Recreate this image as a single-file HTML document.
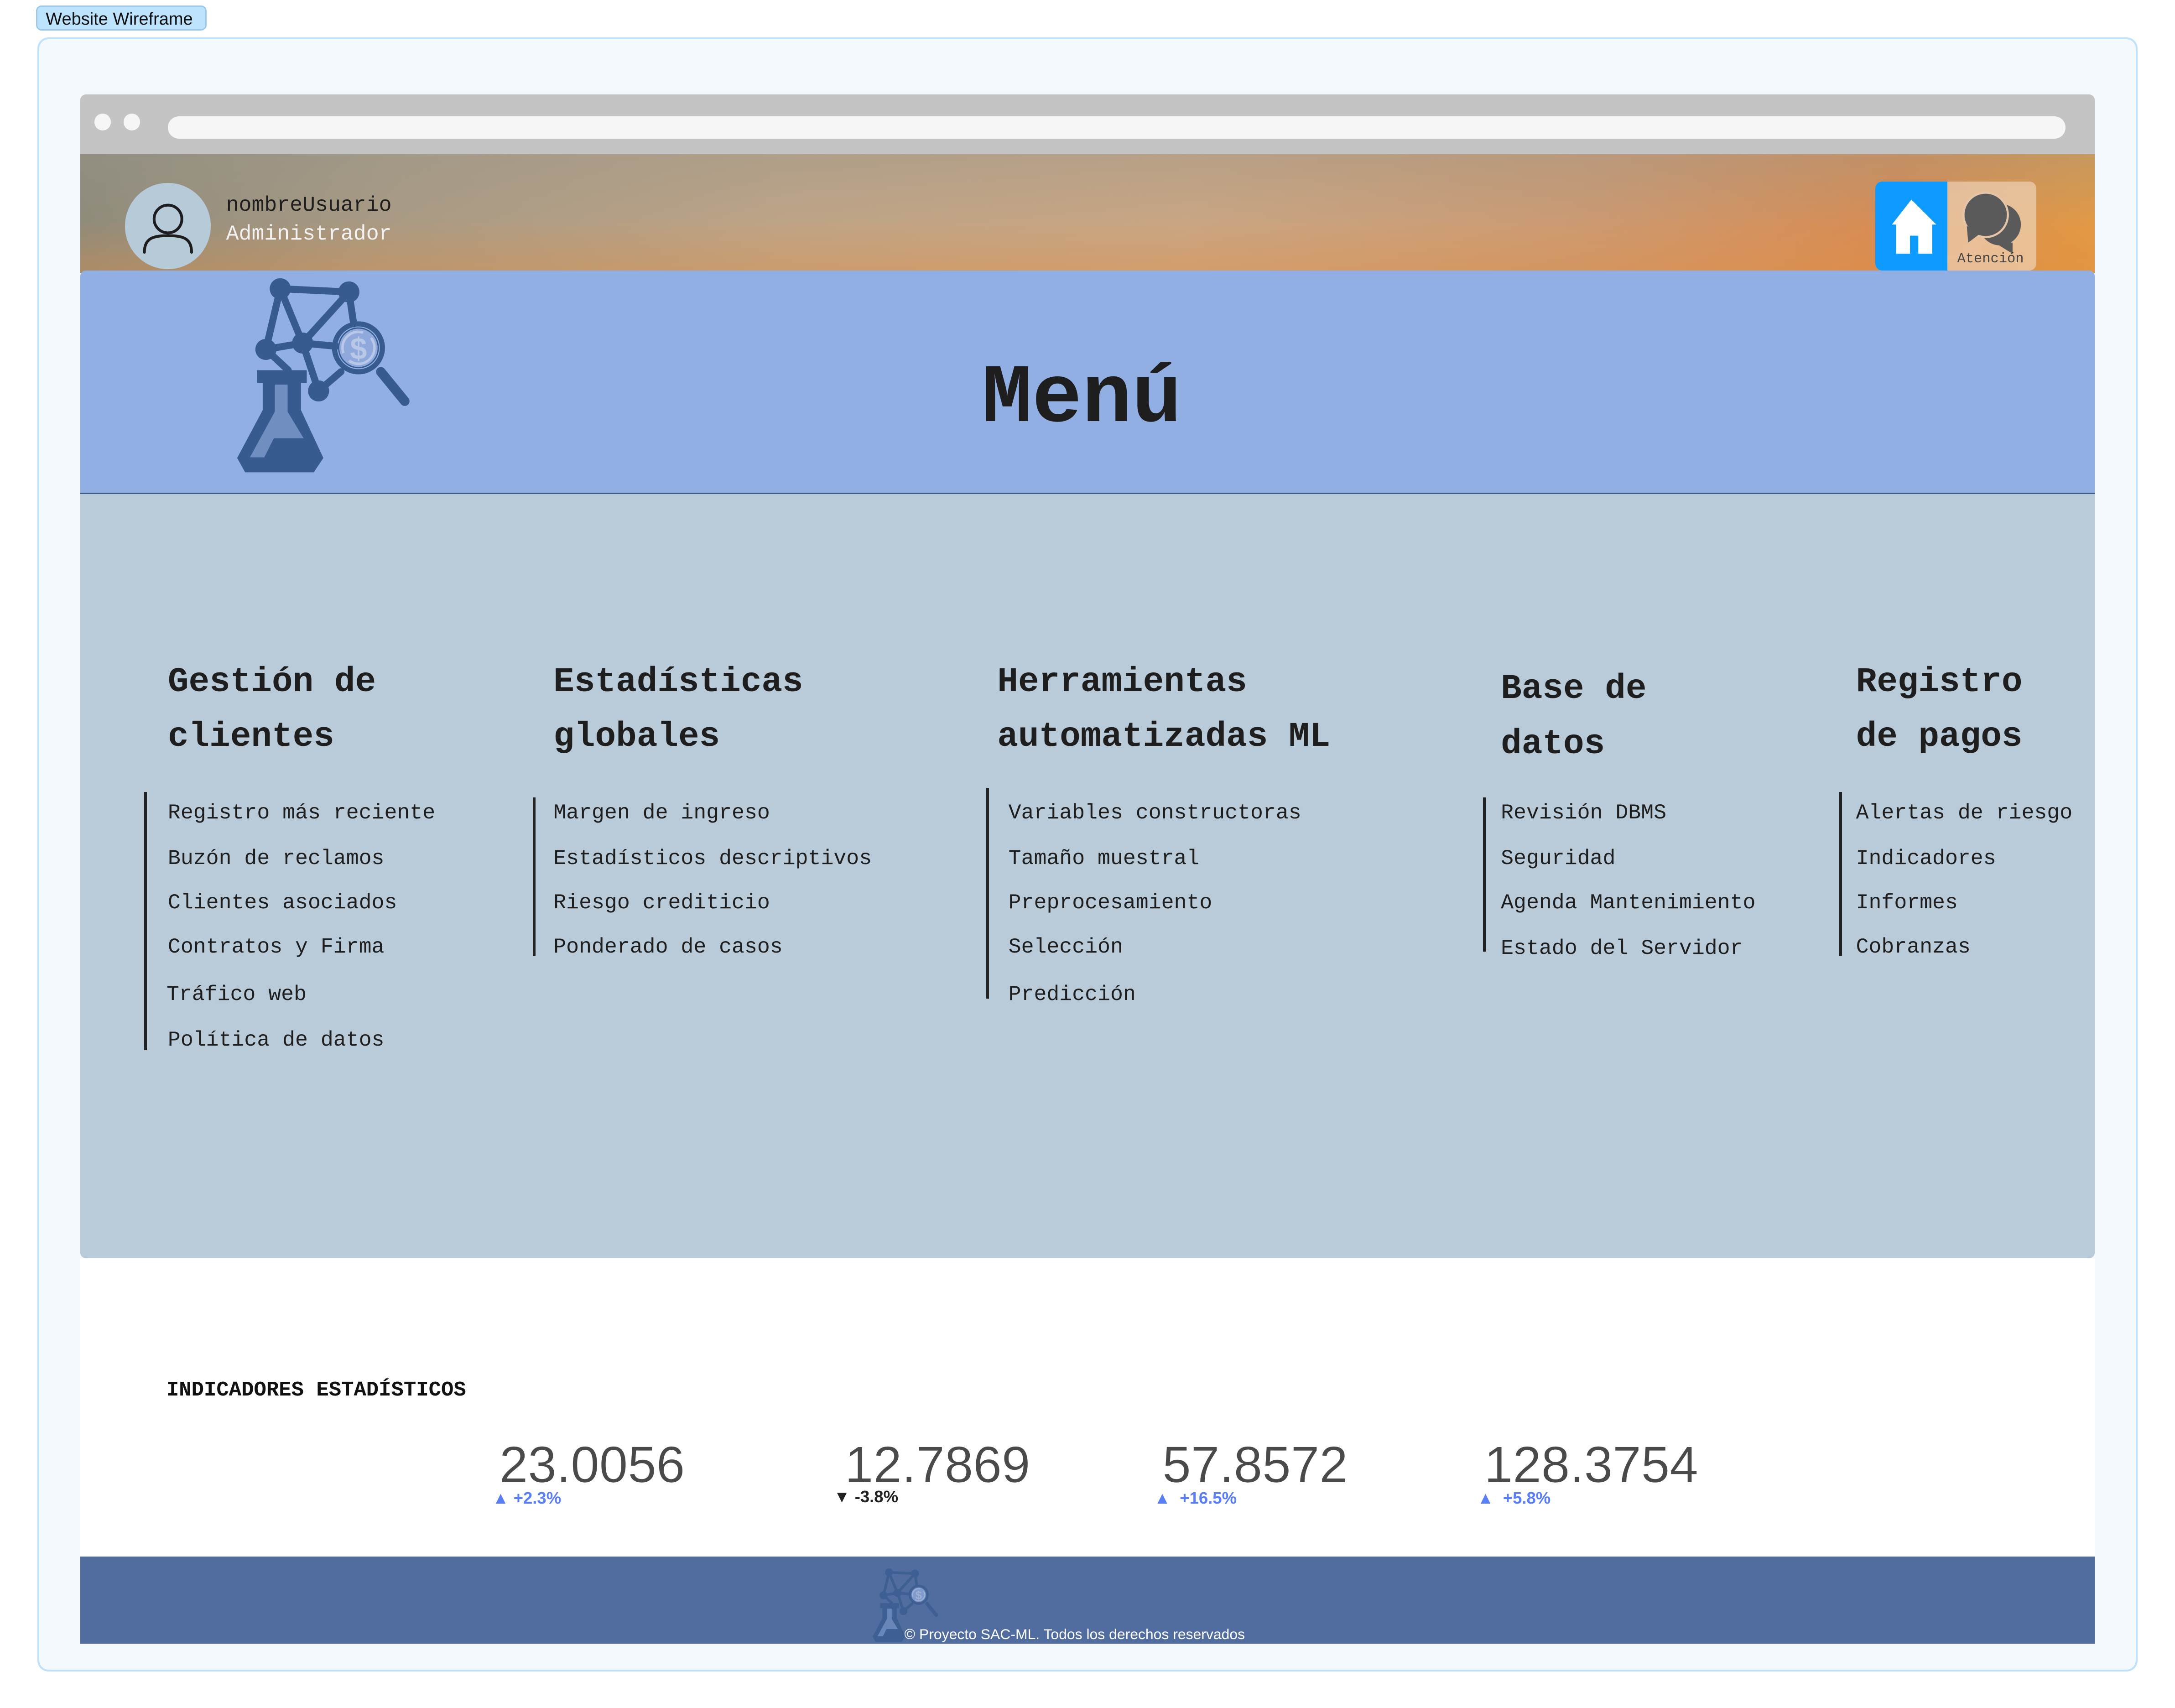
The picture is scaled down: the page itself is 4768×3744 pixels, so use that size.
<!DOCTYPE html>
<html><head><meta charset="utf-8">
<style>
html,body{margin:0;padding:0;background:#fff;}
body{width:4768px;height:3744px;overflow:hidden;}
#z{zoom:3.0408;width:1568px;height:1231px;position:relative;font-family:"Liberation Sans",sans-serif;}
.a{position:absolute;}
.mono{font-family:"Liberation Mono",monospace;}
.h{font-family:"Liberation Mono",monospace;font-weight:bold;font-size:25px;line-height:39.5px;color:#1e1e1e;white-space:nowrap;}
.it{font-family:"Liberation Mono",monospace;font-size:15.3px;color:#1e1e1e;white-space:nowrap;line-height:20px;}
.vl{position:absolute;width:2px;background:#222;}
.num{position:absolute;font-size:37px;font-weight:normal;color:#4a4a4a;letter-spacing:0px;line-height:40px;-webkit-text-stroke:0.2px #fff;}
.pc{position:absolute;font-size:12px;font-weight:bold;line-height:14px;}
</style></head><body>
<div id="z">
<svg width="0" height="0" style="position:absolute">
<defs>
<g id="logo">
<g stroke="#375b8f" stroke-width="22" fill="none" stroke-linecap="round">
<line x1="785" y1="910" x2="1000" y2="920"/>
<line x1="785" y1="910" x2="740" y2="1100"/>
<line x1="785" y1="910" x2="855" y2="1080"/>
<line x1="1000" y1="920" x2="855" y2="1080"/>
<line x1="1000" y1="920" x2="1015" y2="1020"/>
<line x1="740" y1="1100" x2="855" y2="1080"/>
<line x1="855" y1="1080" x2="960" y2="1090"/>
<line x1="855" y1="1080" x2="905" y2="1230"/>
<line x1="905" y1="1230" x2="975" y2="1170"/>
<line x1="740" y1="1100" x2="810" y2="1165"/>
<line x1="1100" y1="1170" x2="1175" y2="1262" stroke-width="30"/>
</g>
<g fill="#375b8f">
<circle cx="785" cy="910" r="33"/><circle cx="1000" cy="920" r="33"/>
<circle cx="740" cy="1100" r="33"/><circle cx="855" cy="1080" r="33"/>
<circle cx="905" cy="1230" r="33"/>
</g>
<circle cx="1030" cy="1095" r="75" fill="none" stroke="#375b8f" stroke-width="16"/>
<circle cx="1030" cy="1095" r="62" fill="#8fa9dc" stroke="#375b8f" stroke-width="4"/>
<circle cx="1030" cy="1095" r="50" fill="none" stroke="#b8c8e6" stroke-width="8" stroke-dasharray="110 30"/>
<text x="1030" y="1130" font-family="Liberation Sans" font-weight="bold" font-size="95" fill="#b8c8e6" text-anchor="middle">$</text>
<path fill="#375b8f" d="M712 1165 H868 V1205 H850 V1290 L920 1440 L890 1485 H675 L650 1440 L730 1290 V1205 H712 Z"/>
<path fill="#708fc0" d="M768 1210 H808 V1295 L858 1378 H765 L735 1438 H690 L768 1295 Z"/>
</g>
</defs></svg>

<div class="a" style="left:26px;top:4px;width:123px;height:18px;background:#bde3fd;border:1px solid #9cc8ea;border-radius:4px;font-size:12.5px;line-height:18px;padding-left:6px;box-sizing:border-box;color:#111;">Website Wireframe</div>
<div class="a" style="left:27px;top:27px;width:1514px;height:1178px;background:#f4f9fd;border:1.5px solid #c0e0fb;border-radius:8px;box-sizing:border-box;"></div>

<div class="a" style="left:58px;top:68px;width:1452px;height:44px;background:#c4c4c4;border-radius:4px 4px 0 0;"></div>
<div class="a" style="left:68px;top:82px;width:12px;height:12px;border-radius:50%;background:#f6f6f6;"></div>
<div class="a" style="left:89px;top:82px;width:12px;height:12px;border-radius:50%;background:#f6f6f6;"></div>
<div class="a" style="left:121px;top:84px;width:1368px;height:16px;border-radius:8px;background:#f6f6f6;"></div>

<div class="a" style="left:58px;top:111px;width:1452px;height:86px;background:linear-gradient(180deg,rgba(150,150,140,0.35) 0%,rgba(0,0,0,0) 60%),linear-gradient(95deg,#8f8b7b 0%,#a89a84 15%,#bea487 35%,#c9a684 55%,#cc9a72 75%,#d88c52 90%,#e29a45 100%);"></div>
<div class="a" style="left:58px;top:111px;width:1452px;height:86px;background:linear-gradient(180deg,rgba(0,0,0,0) 55%,rgba(230,140,60,0.35) 100%);"></div>
<div class="a" style="left:90px;top:132px;width:62px;height:62px;border-radius:50%;background:#b6cad8;"></div>
<svg class="a" style="left:90px;top:132px" width="62" height="62" viewBox="0 0 62 62"><circle cx="31" cy="26" r="10" fill="none" stroke="#1d1d1d" stroke-width="2"/><path d="M14 50 C14 40 20 38 31 38 C42 38 48 40 48 50" fill="none" stroke="#1d1d1d" stroke-width="2" stroke-linecap="round"/></svg>
<div class="a mono" style="left:163px;top:138px;font-size:15.3px;line-height:20px;color:#1e1e1e;">nombreUsuario</div>
<div class="a mono" style="left:163px;top:159px;font-size:15.3px;line-height:20px;color:#f2f2f2;">Administrador</div>

<div class="a" style="left:1352px;top:131px;width:52px;height:64px;background:#0e9bff;border-radius:5px 0 0 5px;"></div>
<svg class="a" style="left:1352px;top:131px" width="52" height="64" viewBox="0 0 52 64"><path fill="#fff" d="M26 13 L44 31 H41 V52 H31 V39 H25 V52 H15 V31 H12 Z"/></svg>
<div class="a" style="left:1404px;top:131px;width:64px;height:64px;background:rgba(240,215,190,0.65);border-radius:0 5px 5px 0;"></div>
<svg class="a" style="left:1404px;top:131px" width="64" height="64" viewBox="0 0 64 64">
<circle cx="38" cy="31" r="15" fill="#5a5a5a"/>
<path d="M34 44 L47 44 L47 52 Z" fill="#5a5a5a"/>
<circle cx="27.6" cy="24" r="16" fill="#5a5a5a" stroke="#e5c4a8" stroke-width="1.5"/>
<path d="M14 32 L15 44 L23 38 Z" fill="#5a5a5a"/>
</svg>
<div class="a mono" style="left:1411px;top:181px;font-size:10px;line-height:12px;color:#444;">Atención</div>

<div class="a" style="left:58px;top:195px;width:1452px;height:161px;background:#92afe4;border-radius:4px 4px 0 0;border-bottom:1px solid #3a5a8a;box-sizing:border-box;"></div>
<svg class="a" style="left:163px;top:199px" width="140" height="145" viewBox="640 870 560 630"><use href="#logo"/></svg>
<div class="a mono" style="left:708px;top:253px;font-size:60px;font-weight:bold;line-height:70px;color:#1e1e1e;">Menú</div>

<div class="a" style="left:58px;top:356px;width:1452px;height:551px;background:#b9cbd8;border-radius:0 0 4px 4px;"></div>

<div class="a h" style="left:121px;top:472px;">Gestión de<br>clientes</div>
<div class="a h" style="left:399px;top:472px;">Estadísticas<br>globales</div>
<div class="a h" style="left:719px;top:472px;">Herramientas<br>automatizadas ML</div>
<div class="a h" style="left:1082px;top:477px;">Base de<br>datos</div>
<div class="a h" style="left:1338px;top:472px;">Registro<br>de pagos</div>

<div class="vl" style="left:104px;top:571px;height:186px;"></div>
<div class="vl" style="left:384px;top:575px;height:114px;"></div>
<div class="vl" style="left:711px;top:568px;height:152px;"></div>
<div class="vl" style="left:1069px;top:575px;height:111px;"></div>
<div class="vl" style="left:1326px;top:571px;height:118px;"></div>

<div class="a it" style="left:121px;top:576px;">Registro más reciente</div>
<div class="a it" style="left:121px;top:609px;">Buzón de reclamos</div>
<div class="a it" style="left:121px;top:641px;">Clientes asociados</div>
<div class="a it" style="left:121px;top:673px;">Contratos y Firma</div>
<div class="a it" style="left:120px;top:707px;">Tráfico web</div>
<div class="a it" style="left:121px;top:740px;">Política de datos</div>

<div class="a it" style="left:399px;top:576px;">Margen de ingreso</div>
<div class="a it" style="left:399px;top:609px;">Estadísticos descriptivos</div>
<div class="a it" style="left:399px;top:641px;">Riesgo crediticio</div>
<div class="a it" style="left:399px;top:673px;">Ponderado de casos</div>

<div class="a it" style="left:727px;top:576px;">Variables constructoras</div>
<div class="a it" style="left:727px;top:609px;">Tamaño muestral</div>
<div class="a it" style="left:727px;top:641px;">Preprocesamiento</div>
<div class="a it" style="left:727px;top:673px;">Selección</div>
<div class="a it" style="left:727px;top:707px;">Predicción</div>

<div class="a it" style="left:1082px;top:576px;">Revisión DBMS</div>
<div class="a it" style="left:1082px;top:609px;">Seguridad</div>
<div class="a it" style="left:1082px;top:641px;">Agenda Mantenimiento</div>
<div class="a it" style="left:1082px;top:674px;">Estado del Servidor</div>

<div class="a it" style="left:1338px;top:576px;">Alertas de riesgo</div>
<div class="a it" style="left:1338px;top:609px;">Indicadores</div>
<div class="a it" style="left:1338px;top:641px;">Informes</div>
<div class="a it" style="left:1338px;top:673px;">Cobranzas</div>

<div class="a" style="left:58px;top:907px;width:1452px;height:215px;background:#fff;"></div>
<div class="a mono" style="left:120px;top:993px;font-size:15px;font-weight:bold;line-height:18px;color:#111;">INDICADORES ESTADÍSTICOS</div>

<div class="num" style="left:360px;top:1036px;">23.0056</div>
<div class="num" style="left:609px;top:1036px;">12.7869</div>
<div class="num" style="left:838px;top:1036px;">57.8572</div>
<div class="num" style="left:1070px;top:1036px;">128.3754</div>
<div class="pc" style="left:355px;top:1073px;color:#5a7ef5;">▲ +2.3%</div>
<div class="pc" style="left:601px;top:1072px;color:#222;">▼ -3.8%</div>
<div class="pc" style="left:832px;top:1073px;color:#5a7ef5;">▲ &nbsp;+16.5%</div>
<div class="pc" style="left:1065px;top:1073px;color:#5a7ef5;">▲ &nbsp;+5.8%</div>

<div class="a" style="left:58px;top:1122px;width:1452px;height:63px;background:#516da0;overflow:hidden;"></div>
<svg class="a" style="left:625px;top:1130px;opacity:0.75" width="55" height="55" viewBox="640 870 560 630"><use href="#logo"/></svg>
<div class="a" style="left:652px;top:1171px;font-size:10.5px;line-height:14px;color:#fff;">© Proyecto SAC-ML. Todos los derechos reservados</div>
</div>
</body></html>
